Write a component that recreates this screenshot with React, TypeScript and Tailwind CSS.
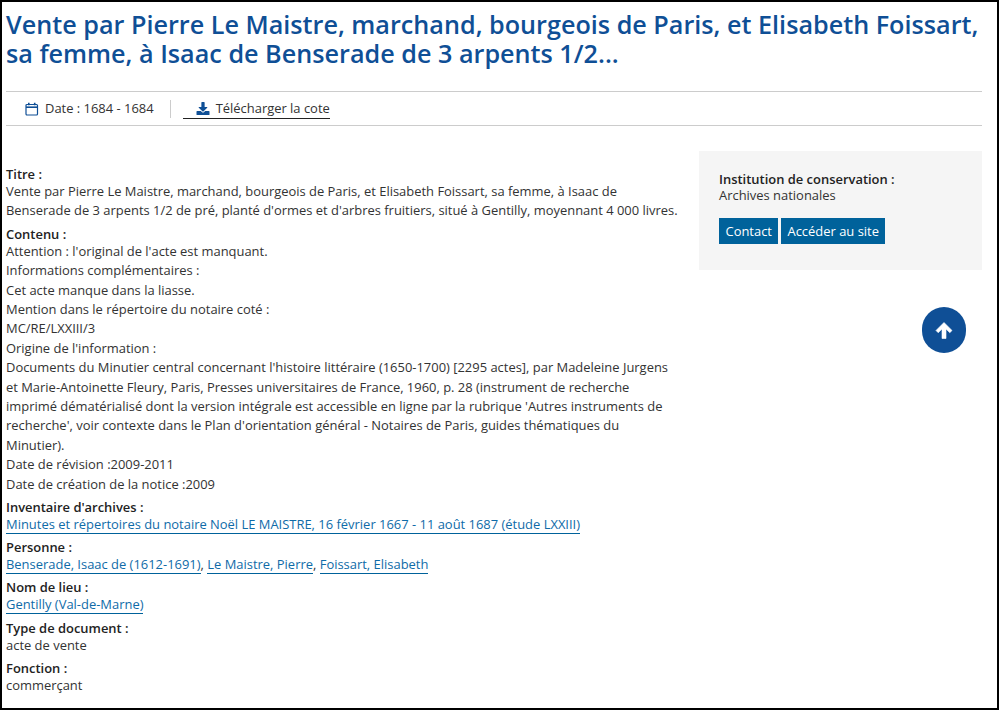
import React from "react";

const L = ({ children }: { children: React.ReactNode }) => (
  <a className="text-[#0f6ba8] border-b border-[#00629b] pb-0">{children}</a>
);

const Label = ({ children }: { children: React.ReactNode }) => (
  <div className="font-semibold text-[12.94px] leading-[16px] text-[#222]">{children}</div>
);

const Line = ({ children }: { children: React.ReactNode }) => <div>{children}</div>;

export default function App() {
  return (
    <div className="relative w-[999px] h-[710px] overflow-hidden bg-white border-2 border-black text-[12.94px] leading-[19.4px] text-[#333]" style={{ fontFamily: '"Open Sans", sans-serif' }}>
      <div className="pl-1 pr-[15px]">
        <h1 className="text-[25.2px] leading-[29px] font-semibold text-[#0f4f96] pt-[8px] mr-[-6px]">
          Vente par Pierre Le Maistre, marchand, bourgeois de Paris, et Elisabeth Foissart, sa femme, à Isaac de Benserade de 3 arpents 1/2...
        </h1>
        <div className="mt-[23px] h-[35px] border-y border-[#ccc] flex items-center pl-[19px]">
          <svg width="14" height="14" viewBox="0 0 14 14" fill="none" stroke="#0f4f96" strokeWidth="1.2" className="mr-[6px]">
            <rect x="1" y="2.5" width="11.5" height="10.5" rx="1" />
            <path d="M1 5.2h11.5" strokeWidth="1.6" />
            <path d="M3.8 0.8v2.5M9.7 0.8v2.5" strokeWidth="1.6" />
          </svg>
          <span>Date : 1684 - 1684</span>
          <span className="w-px h-[18px] bg-[#ccc] ml-[16px] mr-[12px]" />
          <span className="flex items-center border-b border-[#222] pl-[13px] h-[20px] mt-[1px]">
            <svg width="14" height="13" viewBox="0 0 512 512" fill="#0f4f96" className="mr-[6px]">
              <path d="M216 0h80c13.3 0 24 10.700 24 24v168h87.700c17.800 0 26.700 21.500 14.100 34.100L269.700 378.300c-7.500 7.500-19.800 7.500-27.300 0L90.100 226.100c-12.600-12.600-3.700-34.100 14.100-34.100H192V24c0-13.300 10.700-24 24-24zm296 376v112c0 13.300-10.700 24-24 24H24c-13.300 0-24-10.700-24-24V376c0-13.300 10.700-24 24-24h146.700l49 49c20.100 20.100 52.500 20.100 72.600 0l49-49H488c13.300 0 24 10.700 24 24z" />
            </svg>
            <span>Télécharger la cote</span>
          </span>
        </div>

        <div className="flex justify-between mt-[25px]">
          <div className="w-[673px] pt-[15px]">
            <Label>Titre :</Label>
            <Line>Vente par Pierre Le Maistre, marchand, bourgeois de Paris, et Elisabeth Foissart, sa femme, à Isaac de Benserade de 3 arpents 1/2 de pré, planté d'ormes et d'arbres fruitiers, situé à Gentilly, moyennant 4 000 livres.</Line>
            <div className="mt-[5px]"><Label>Contenu :</Label></div>
            <Line>Attention : l'original de l'acte est manquant.</Line>
            <Line>Informations complémentaires :</Line>
            <Line>Cet acte manque dans la liasse.</Line>
            <Line>Mention dans le répertoire du notaire coté :</Line>
            <Line>MC/RE/LXXIII/3</Line>
            <Line>Origine de l'information :</Line>
            <Line>Documents du Minutier central concernant l'histoire littéraire (1650-1700) [2295 actes], par Madeleine Jurgens et Marie-Antoinette Fleury, Paris, Presses universitaires de France, 1960, p. 28 (instrument de recherche imprimé dématérialisé dont la version intégrale est accessible en ligne par la rubrique 'Autres instruments de recherche', voir contexte dans le Plan d'orientation général - Notaires de Paris, guides thématiques du Minutier).</Line>
            <Line>Date de révision :2009-2011</Line>
            <Line>Date de création de la notice :2009</Line>
            <div className="mt-[5px]"><Label>Inventaire d'archives :</Label></div>
            <Line><L>Minutes et répertoires du notaire Noël LE MAISTRE, 16 février 1667 - 11 août 1687 (étude LXXIII)</L></Line>
            <div className="mt-[4.8px]"><Label>Personne :</Label></div>
            <Line><L>Benserade, Isaac de (1612-1691)</L>, <L>Le Maistre, Pierre</L>, <L>Foissart, Elisabeth</L></Line>
            <div className="mt-[4.4px]"><Label>Nom de lieu :</Label></div>
            <Line><L>Gentilly (Val-de-Marne)</L></Line>
            <div className="mt-[5px]"><Label>Type de document :</Label></div>
            <Line>acte de vente</Line>
            <div className="mt-[4.8px]"><Label>Fonction :</Label></div>
            <Line>commerçant</Line>
          </div>
          <aside className="w-[283px] h-[119px] bg-[#f5f5f5] pt-[20px] pl-[20px] shrink-0">
            <Label>Institution de conservation :</Label>
            <div className="leading-[16px]">Archives nationales</div>
            <div className="flex gap-[3px] mt-[15px]">
              <span className="bg-[#00629b] text-white h-[26px] pt-[1px] px-[6.5px] flex items-center">Contact</span>
              <span className="bg-[#00629b] text-white h-[26px] pt-[1px] px-[6px] flex items-center">Accéder au site</span>
            </div>
          </aside>
        </div>
      </div>
      <div className="absolute left-[920px] top-[305px] w-[44px] h-[46px] rounded-full bg-[#0f4f96] flex items-center justify-center">
        <svg width="18" height="17" viewBox="0 0 18 17" fill="#fff">
          <path d="M9 0.500L17 8.500L14.800 10.700L11 7V16.500H7V7L3.200 10.700L1 8.500Z" strokeLinejoin="round" stroke="#fff" strokeWidth="0.600" />
        </svg>
      </div>
    </div>
  );
}
